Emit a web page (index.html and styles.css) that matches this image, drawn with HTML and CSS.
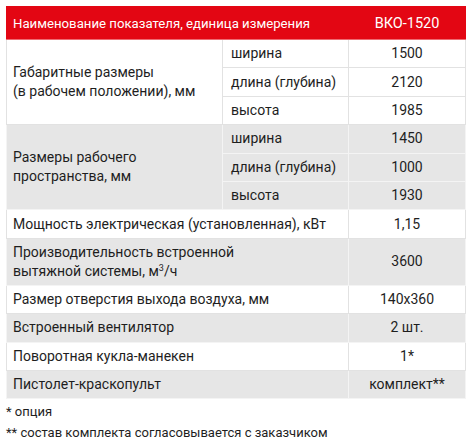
FILE: index.html
```html
<!DOCTYPE html>
<html lang="ru">
<head>
<meta charset="utf-8">
<link rel="stylesheet" href="styles.css">
</head>
<body>
<table class="spec">
  <colgroup>
    <col class="c1"><col class="c2"><col class="c3">
  </colgroup>
  <thead>
    <tr class="head">
      <th colspan="2" class="name">Наименование показателя, единица измерения</th>
      <th class="val">ВКО-1520</th>
    </tr>
  </thead>
  <tbody>
    <tr><td rowspan="3" class="name">Габаритные размеры<br>(в рабочем положении), мм</td><td class="sub">ширина</td><td class="val">1500</td></tr>
    <tr><td class="sub">длина (глубина)</td><td class="val">2120</td></tr>
    <tr><td class="sub">высота</td><td class="val">1985</td></tr>
    <tr class="gray"><td rowspan="3" class="name">Размеры рабочего<br>пространства, мм</td><td class="sub">ширина</td><td class="val">1450</td></tr>
    <tr class="gray"><td class="sub">длина (глубина)</td><td class="val">1000</td></tr>
    <tr class="gray"><td class="sub">высота</td><td class="val">1930</td></tr>
    <tr><td colspan="2" class="name">Мощность электрическая (установленная), кВт</td><td class="val">1,15</td></tr>
    <tr class="gray tall"><td colspan="2" class="name">Производительность встроенной<br>вытяжной системы, м<sup>3</sup>/ч</td><td class="val">3600</td></tr>
    <tr><td colspan="2" class="name">Размер отверстия выхода воздуха, мм</td><td class="val">140х360</td></tr>
    <tr class="gray"><td colspan="2" class="name">Встроенный вентилятор</td><td class="val">2 шт.</td></tr>
    <tr><td colspan="2" class="name">Поворотная кукла-манекен</td><td class="val">1*</td></tr>
    <tr class="gray"><td colspan="2" class="name">Пистолет-краскопульт</td><td class="val">комплект**</td></tr>
  </tbody>
</table>
<div class="notes">
  <p>* опция</p>
  <p>** состав комплекта согласовывается с заказчиком</p>
</div>
</body>
</html>
```

FILE: styles.css
```css
html, body {
  margin: 0;
  background: #ffffff;
}
body {
  padding: 6px;
  font-family: Roboto, "Liberation Sans", sans-serif;
  font-size: 14px;
  color: #1e1e1e;
}
.spec {
  border-collapse: collapse;
  width: 459px;
  table-layout: fixed;
}
.c1 { width: 216px; }
.c2 { width: 126px; }
.c3 { width: 117px; }
.spec th, .spec td {
  border: 1px solid #e2e2e2;
  padding: 0 6px;
  vertical-align: middle;
  line-height: 19px;
  font-weight: 400;
}
.head th {
  background: #e30613;
  color: #ffffff;
  height: 32px;
  font-size: 13.2px;
  border-color: #ee6a72;
  border-top-color: #e30613;
  border-left-color: #e30613;
  border-right-color: #e30613;
  text-align: left;
}
.head th.val { font-size: 14.5px; }
.spec tbody tr { height: 28.4px; }
.spec tbody tr.tall { height: 47px; }
.gray td {
  background: #e6e6e6;
  border-color: #f4f4f4;
}
.head th.val, .spec td.val {
  text-align: center;
}
.spec td.sub { padding-left: 8px; }
sup {
  font-size: 9px;
  line-height: 0;
  vertical-align: 5px;
}
.notes {
  margin-top: 2px;
  font-size: 13px;
}
.notes p {
  margin: 0;
  line-height: 21px;
}
```
